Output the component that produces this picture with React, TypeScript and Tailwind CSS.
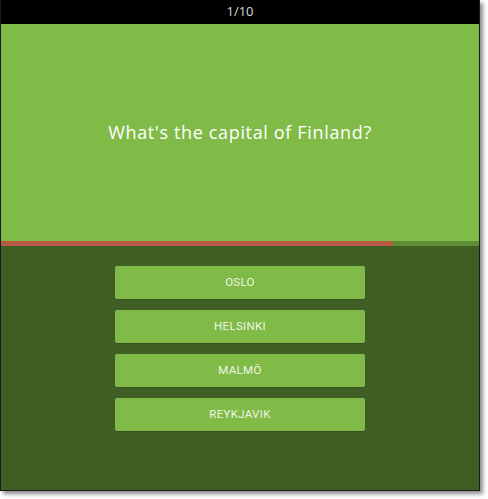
const answers = ['OSLO', 'HELSINKI', 'MALMÖ', 'REYKJAVIK']

export default function App() {
  return (
    <div className="w-[488px] h-[499px] bg-white">
      <div className="w-[480px] h-[491px] flex flex-col border-l border-r border-b border-[#1b1b1b] shadow-[3px_3px_4px_rgba(0,0,0,0.45)] overflow-hidden">
        <div className="h-[24px] bg-black flex items-center justify-center text-[13px] text-[#d8d8d8] font-['Open_Sans',sans-serif]">
          1/10
        </div>
        <div className="h-[217px] bg-[#7fbb46] flex items-center justify-center">
          <h1 className="text-[18px] text-white tracking-[0.65px] font-normal font-['Open_Sans',sans-serif]">
            What's the capital of Finland?
          </h1>
        </div>
        <div className="h-[5px] bg-[#5f8f35] flex">
          <div className="w-[392px] bg-[#b65a45]" />
        </div>
        <div className="flex-1 bg-[#3f5e23] flex flex-col items-center pt-[20px] gap-[11px]">
          {answers.map((a) => (
            <button
              key={a}
              className="w-[250px] h-[33px] bg-[#7fbb46] rounded-[2px] text-[11.5px] text-[#eef5e6] tracking-[0.3px] font-['Roboto',sans-serif] font-normal shadow-[0_1px_0_rgba(0,0,0,0.15)]"
            >
              {a}
            </button>
          ))}
        </div>
      </div>
    </div>
  )
}
